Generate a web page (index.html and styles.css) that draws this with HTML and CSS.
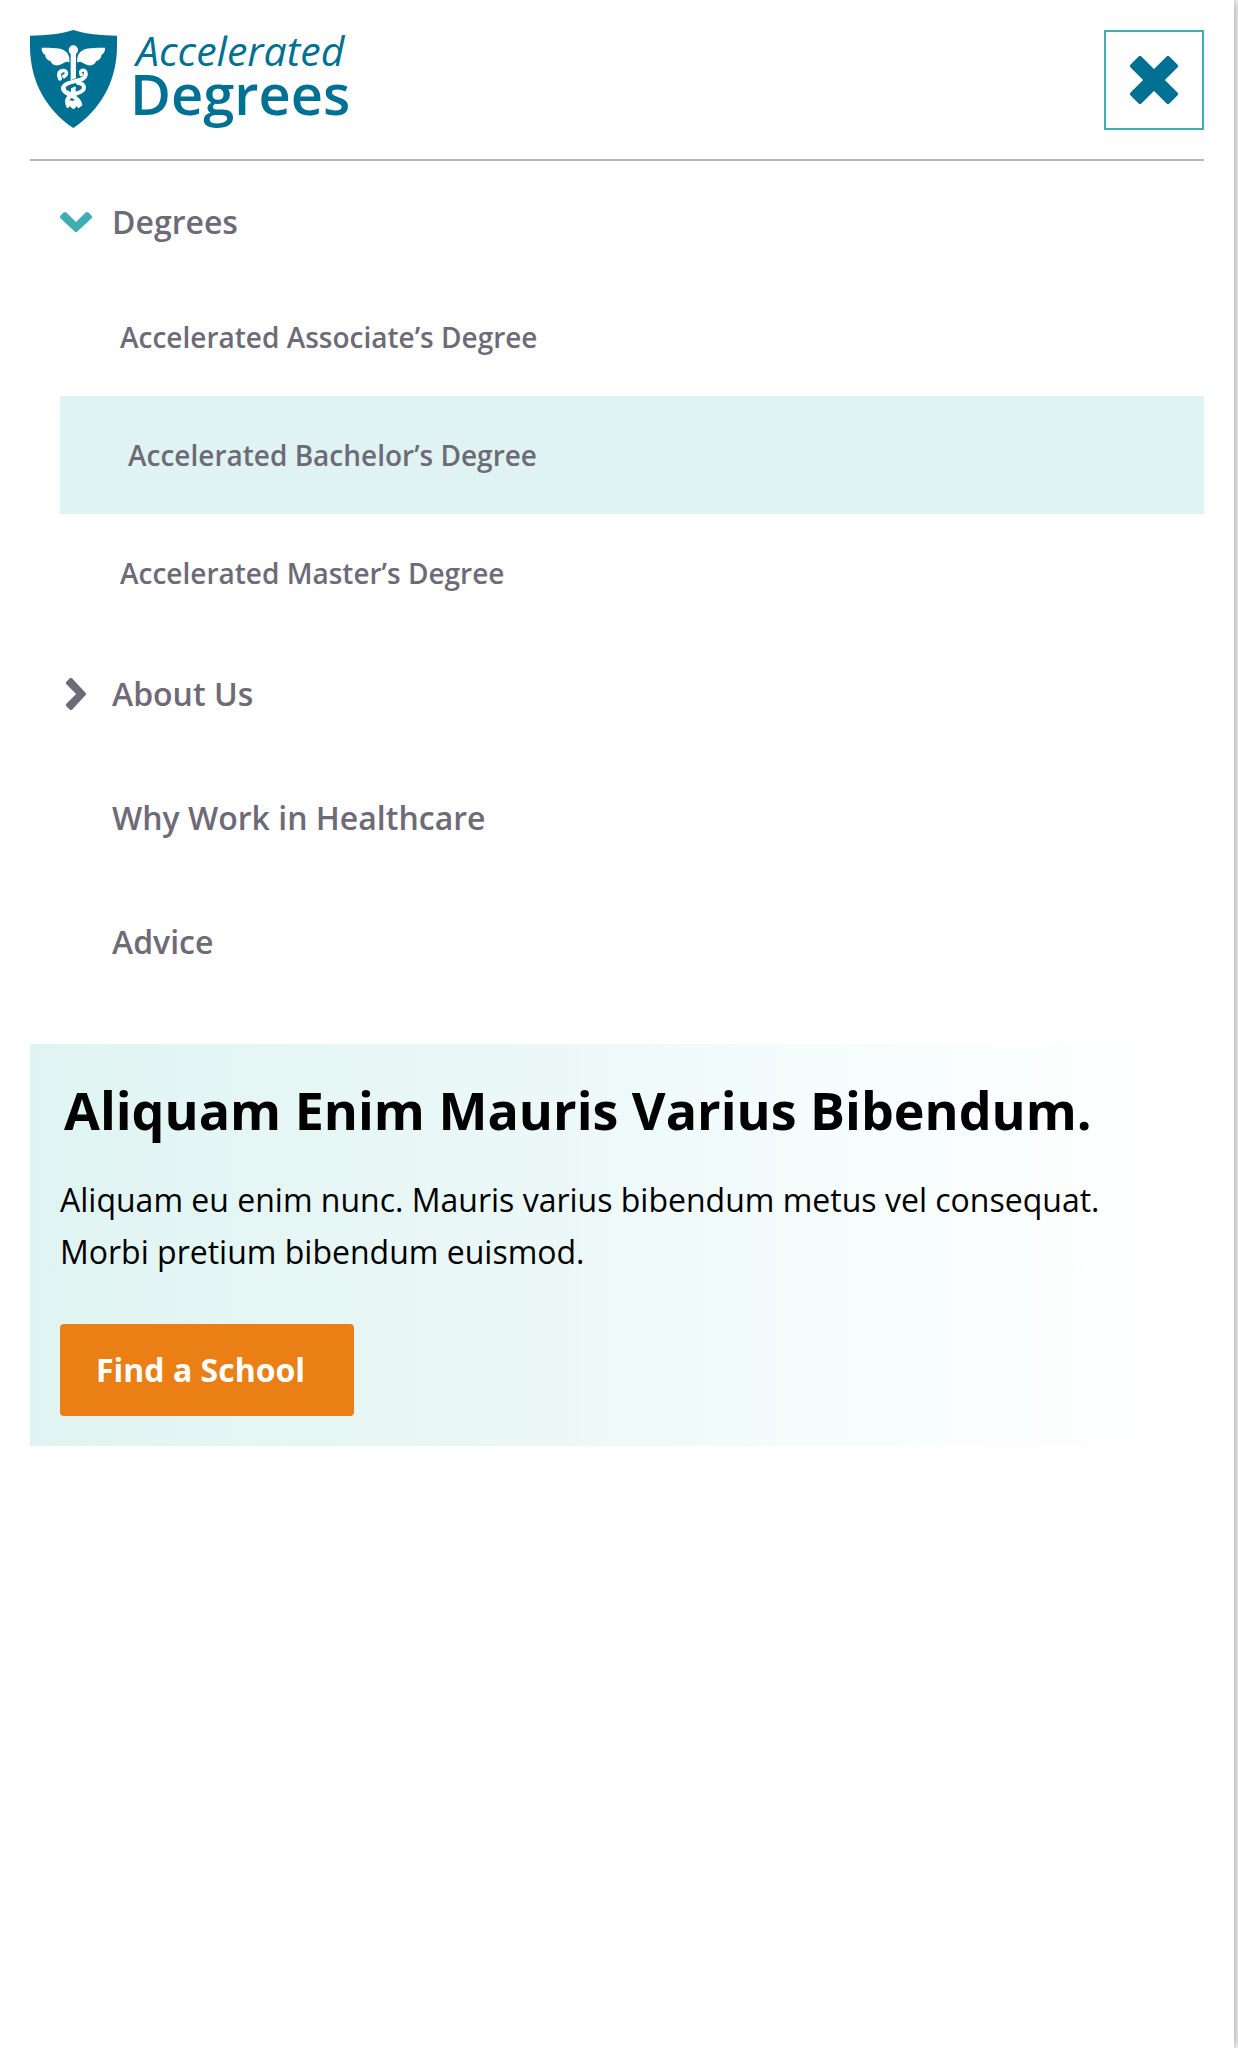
FILE: index.html
```html
<!DOCTYPE html>
<html lang="en">
<head>
<meta charset="utf-8">
<meta name="viewport" content="width=device-width, initial-scale=1">
<title>Accelerated Degrees</title>
<link rel="stylesheet" href="styles.css">
</head>
<body>
<div class="drawer">
  <header class="header">
    <a class="logo" href="#">
      <svg class="shield" viewBox="30 30 261 294" aria-hidden="true">
        <path fill="#007093" d="M30 47C78 47 126 41 160 30C194 41 242 47 291 47V78C291 188 238 272 160 324C82 272 30 188 30 78Z"/>
        <g fill="#fff">
          <path d="M65 83C92 84 126 81 139 96C149 107 149 118 148 128C140 120 132 130 118 135C105 139 95 133 92 124C82 121 75 112 76 105C68 100 64 92 65 83Z"/>
          <path d="M255 83C228 84 194 81 181 96C171 107 171 118 172 128C180 120 188 130 202 135C215 139 225 133 228 124C238 121 245 112 244 105C252 100 256 92 255 83Z"/>
          <circle cx="160" cy="90" r="14"/>
          <path d="M152 96H168V174L152 181Z"/>
          <path d="M153 205L167 199V217L160 224L153 217Z"/>
          <path d="M136 248Q148 236 158 243Q172 234 184 248L180 262Q174 268 170 258L166 263Q160 270 154 263L150 258Q144 268 139 262Z"/>
        </g>
        <g fill="none" stroke="#fff" stroke-width="12" stroke-linecap="round">
          <path d="M120 176C113 160 120 151 131 152C143 156 139 166 132 169"/>
          <path d="M184 163C180 150 191 149 196 155C203 176 182 180 163 184C139 190 125 197 131 211C136 222 149 222 158 229C170 235 178 240 181 254"/>
          <path d="M174 189C197 191 196 209 181 216C166 222 145 226 141 242L143 253"/>
          <path d="M129 204C132 217 143 218 150 221"/>
        </g>
        <circle cx="131" cy="160" r="3" fill="#007093"/>
        <circle cx="189" cy="158" r="3" fill="#007093"/>
      </svg>
      <span class="wordmark">
        <span class="wordmark-top">Accelerated</span>
        <span class="wordmark-bottom">Degrees</span>
      </span>
    </a>
    <button class="close" type="button" aria-label="Close menu">
      <svg class="close-icon" viewBox="0 0 48 48" aria-hidden="true">
        <path d="M10 2L24 16L38 2L46 10L32 24L46 38L38 46L24 32L10 46L2 38L16 24L2 10Z"/>
      </svg>
    </button>
  </header>

  <nav class="nav" aria-label="Main">
    <ul class="menu">
      <li>
        <a class="item item-open" href="#">
          <span class="marker"><svg class="chevron chevron-down" viewBox="0 0 32 22" aria-hidden="true"><path d="M5 3L16 14L27 3L30 6L16 19L2 6Z"/></svg></span>
          Degrees
        </a>
        <ul class="submenu">
          <li><a class="subitem" href="#">Accelerated Associate’s Degree</a></li>
          <li><a class="subitem subitem-active" href="#">Accelerated Bachelor’s Degree</a></li>
          <li><a class="subitem" href="#">Accelerated Master’s Degree</a></li>
        </ul>
      </li>
      <li>
        <a class="item" href="#">
          <span class="marker"><svg class="chevron chevron-right" viewBox="0 0 22 32" aria-hidden="true"><path d="M3 5L14 16L3 27L6 30L19 16L6 2Z"/></svg></span>
          About Us
        </a>
      </li>
      <li><a class="item" href="#"><span class="marker"></span>Why Work in Healthcare</a></li>
      <li><a class="item" href="#"><span class="marker"></span>Advice</a></li>
    </ul>
  </nav>

  <section class="promo">
    <h2 class="promo-title">Aliquam Enim Mauris Varius Bibendum.</h2>
    <p class="promo-text">Aliquam eu enim nunc. Mauris varius bibendum metus vel consequat. Morbi pretium bibendum euismod.</p>
    <button class="promo-button" type="button">Find a School</button>
  </section>
</div>
</body>
</html>
```
FILE: styles.css
```css
* {
  box-sizing: border-box;
}

body {
  margin: 0;
  padding-right: 4px;
  background: #fff;
  color: #000;
  font-family: "Open Sans", "Noto Sans", sans-serif;
  overflow-x: hidden;
}

a {
  color: inherit;
  text-decoration: none;
}

ul {
  margin: 0;
  padding: 0;
  list-style: none;
}

.drawer {
  min-height: 100vh;
  padding: 30px 30px 0;
  background: #fff;
  box-shadow: 0 0 10px rgba(0, 0, 0, 0.5);
}

.header {
  display: flex;
  justify-content: space-between;
  align-items: flex-start;
  padding-bottom: 29px;
  border-bottom: 2px solid #bbb6bc;
}

.logo {
  display: flex;
  gap: 13px;
  color: #007093;
}

.shield {
  display: block;
  width: 87px;
  height: 98px;
}

.wordmark {
  display: flex;
  flex-direction: column;
}

.wordmark-top {
  padding-left: 6px;
  font-size: 41px;
  font-style: italic;
  line-height: 40px;
}

.wordmark-bottom {
  font-size: 56px;
  font-weight: 600;
  line-height: 46px;
}

.close {
  display: flex;
  align-items: center;
  justify-content: center;
  width: 100px;
  height: 100px;
  padding: 0;
  border: 2px solid #40adb4;
  background: #fff;
}

.close-icon {
  width: 48px;
  height: 48px;
  fill: #007093;
  stroke: #007093;
  stroke-width: 4;
  stroke-linejoin: round;
}

.nav {
  padding: 4px 0 40px 30px;
  color: #6e6a77;
  font-weight: 600;
}

.item {
  display: flex;
  align-items: center;
  height: 124px;
  font-size: 32px;
  line-height: 42px;
}

.item-open {
  height: 113px;
}

.marker {
  display: flex;
  justify-content: center;
  width: 32px;
  margin-right: 20px;
}

.chevron {
  fill: currentColor;
  stroke: currentColor;
  stroke-width: 4;
  stroke-linejoin: round;
}

.chevron-down {
  width: 32px;
  height: 22px;
  color: #40adb4;
}

.chevron-right {
  width: 22px;
  height: 32px;
}

.subitem {
  display: flex;
  align-items: center;
  height: 118px;
  padding-left: 60px;
  font-size: 28px;
}

.subitem-active {
  padding-left: 68px;
  background: #dff4f2;
}

.promo {
  padding: 30px;
  background: linear-gradient(90deg, #dff4f2, #ecf8f8 45%, #f4fcfc 65%, #fff 96%);
}

.promo-title {
  margin: 0 0 28px;
  padding-left: 4px;
  font-size: 52px;
  font-weight: 700;
  line-height: 72px;
}

.promo-text {
  margin: 0 0 46px;
  font-size: 32px;
  line-height: 52px;
}

.promo-button {
  display: block;
  height: 92px;
  padding: 0 49px 2px 36px;
  border: 0;
  border-radius: 4px;
  background: #ea8015;
  color: #fff;
  font: 700 32px "Open Sans", "Noto Sans", sans-serif;
}
```
